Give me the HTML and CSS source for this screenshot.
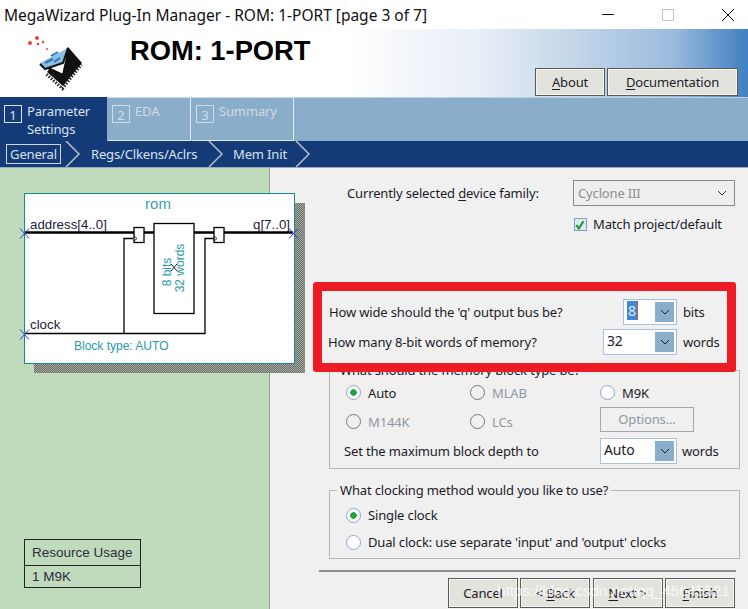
FILE: index.html
```html
<!DOCTYPE html>
<html>
<head>
    <title>MegaWizard Plug-In Manager</title>
    <link rel="stylesheet" href="styles.css">
</head>
<body>
    <div class="wizard">
        <div class="titlebar">
            <span class="titlebar__text">MegaWizard Plug-In Manager - ROM: 1-PORT [page 3 of 7]</span>
            <div class="titlebar__controls">
                <svg class="titlebar__icon" width="14" height="14" viewBox="0 0 14 14"><path d="M1 6.5h12" stroke="#111" fill="none"/></svg>
                <svg class="titlebar__icon" width="14" height="14" viewBox="0 0 14 14"><rect x="1.5" y="1.5" width="11" height="11" stroke="#c4c4c4" fill="none"/></svg>
                <svg class="titlebar__icon" width="14" height="14" viewBox="0 0 14 14"><path d="M1 1l12 12M13 1L1 13" stroke="#111" fill="none"/></svg>
            </div>
        </div>

        <header class="banner">
            <svg class="banner__logo" width="60" height="60" viewBox="0 0 60 60">
                <g fill="#e0483a">
                    <circle cx="4" cy="11" r="2"/><circle cx="11" cy="6" r="2"/><circle cx="12" cy="12" r="1.3"/>
                    <circle cx="17" cy="10" r="1.2"/><circle cx="21" cy="17" r="1"/>
                </g>
                <path d="M21 40l16 14 19-23-14-16z" fill="#111"/>
                <path d="M21 41l16 14 19-24" stroke="#222" stroke-width="3" stroke-dasharray="1.500 1.500" fill="none" transform="translate(-.5 1.500)"/>
                <path d="M22 36l15 7 4-18z" fill="#fff"/>
                <path d="M22 36l15 7 4-18" fill="none" stroke="#111" stroke-width="2"/>
                <path d="M14 31l28-15-5 15-18 5z" fill="#8dbfe0"/>
                <path d="M19 31l8-4M28 30l6-4M25 24l7-4" stroke="#2b75b5" stroke-width="2" fill="none"/>
                <path d="M14 32l5 5 18-6 5-15" stroke="#111" stroke-width="2" fill="none"/>
            </svg>
            <h1 class="banner__title">ROM: 1-PORT</h1>
            <div class="banner__buttons">
                <button class="btn btn--about"><u>A</u>bout</button>
                <button class="btn btn--docs"><u>D</u>ocumentation</button>
            </div>
        </header>

        <nav class="tabs">
            <div class="tab tab--active"><span class="tab__num">1</span><span class="tab__label">Parameter<br>Settings</span></div>
            <div class="tab tab--eda"><span class="tab__num">2</span><span class="tab__label">EDA</span></div>
            <div class="tab tab--summary"><span class="tab__num">3</span><span class="tab__label">Summary</span></div>
        </nav>

        <nav class="subnav">
            <span class="subnav__item subnav__item--active">General</span>
            <svg class="subnav__arrow" width="16" height="26" viewBox="0 0 16 26"><path d="M1 0l13 13L1 26" stroke="#b5bdc8" stroke-width="1.5" fill="none"/></svg>
            <span class="subnav__item subnav__item--regs">Regs/Clkens/Aclrs</span>
            <svg class="subnav__arrow" width="16" height="26" viewBox="0 0 16 26"><path d="M1 0l13 13L1 26" stroke="#b5bdc8" stroke-width="1.5" fill="none"/></svg>
            <span class="subnav__item subnav__item--mem">Mem Init</span>
            <svg class="subnav__arrow" width="16" height="26" viewBox="0 0 16 26"><path d="M1 0l13 13L1 26" stroke="#b5bdc8" stroke-width="1.5" fill="none"/></svg>
        </nav>

        <main class="content">
            <aside class="symbol-pane">
                <svg class="symbol" width="282" height="184" viewBox="0 0 282 184">
                    <defs>
                        <pattern id="dots" width="2" height="2" patternUnits="userSpaceOnUse">
                            <rect width="2" height="2" fill="#a4a89f"/><rect width="1" height="1" fill="#6c706a"/><rect x="1" y="1" width="1" height="1" fill="#6c706a"/>
                        </pattern>
                    </defs>
                    <rect x="10" y="10" width="271" height="170" fill="url(#dots)"/>
                    <rect x="0.5" y="0.5" width="270" height="170" fill="#fff" stroke="#138c92"/>
                    <text x="134" y="16" class="symbol__name" text-anchor="middle">rom</text>
                    <path d="M1 39.500h129M170 39.500h99" stroke="#000" stroke-width="2.500" fill="none"/>
                    <path d="M1 140.500h180V45.500h9M100 140.500V45.500h9" stroke="#000" fill="none" stroke-width="1.300"/>
                    <rect x="110" y="34.500" width="10" height="15" fill="#fff" stroke="#000" stroke-width="1.300"/>
                    <rect x="190" y="34.500" width="10" height="15" fill="#fff" stroke="#000" stroke-width="1.300"/>
                    <path d="M110 43l3 2.500-3 2.500M190 43l3 2.500-3 2.500" fill="none" stroke="#000" stroke-width=".8"/>
                    <rect x="130" y="30.500" width="40" height="90" fill="#fff" stroke="#000" stroke-width="1.300"/>
                    <text class="symbol__rotated" transform="translate(147 79) rotate(-90)" text-anchor="middle">8 bits</text>
                    <text class="symbol__rotated" transform="translate(160 75) rotate(-90)" text-anchor="middle">32 words</text>
                    <path d="M147 71l6 7M153 71l-6 7" stroke="#222" fill="none"/>
                    <text x="6" y="36" class="symbol__pin">address[4..0]</text>
                    <text x="266" y="36" class="symbol__pin" text-anchor="end">q[7..0]</text>
                    <text x="6" y="136" class="symbol__pin">clock</text>
                    <text x="50" y="157" class="symbol__block">Block type: AUTO</text>
                    <path d="M-4 34.500l9 10M5 34.500l-9 10M-4 135.500l9 10M5 135.500l-9 10M265 34.500l9 10M274 34.500l-9 10" stroke="#2b3fd0" fill="none" transform="translate(0 1)"/>
                </svg>
                <table class="usage">
                    <tr><th>Resource Usage</th></tr>
                    <tr><td>1 M9K</td></tr>
                </table>
            </aside>

            <section class="form-pane">
                <div class="device-row">
                    <label class="device-row__label">Currently selected <u>d</u>evice family:</label>
                    <div class="device-select">
                        <span class="device-select__value">Cyclone III</span>
                        <svg width="10" height="6" viewBox="0 0 10 6"><path d="M1 1l4 4 4-4" stroke="#333" fill="none"/></svg>
                    </div>
                </div>
                <label class="match">
                    <span class="check"><svg width="13" height="13" viewBox="0 0 13 13"><path d="M1.500 6l3 4L10 1.500" stroke="#1c9b2c" stroke-width="2.500" fill="none"/></svg></span>
                    Match project/default
                </label>

                <div class="sizes">
                    <div class="sizes__row">
                        <span class="sizes__label">How wide should the 'q' output bus be?</span>
                        <div class="combo combo--bits">
                            <span class="combo__value"><span class="combo__selected">8</span></span>
                            <span class="combo__arrow"><svg width="10" height="6" viewBox="0 0 10 6"><path d="M1 1l4 4 4-4" stroke="#222" fill="none"/></svg></span>
                        </div>
                        <span class="sizes__unit">bits</span>
                    </div>
                    <div class="sizes__row sizes__row--second">
                        <span class="sizes__label">How many 8-bit words of memory?</span>
                        <div class="combo combo--words">
                            <span class="combo__value">32</span>
                            <span class="combo__arrow"><svg width="10" height="6" viewBox="0 0 10 6"><path d="M1 1l4 4 4-4" stroke="#222" fill="none"/></svg></span>
                        </div>
                        <span class="sizes__unit">words</span>
                    </div>
                </div>

                <fieldset class="group group--block">
                    <legend class="group__legend">What should the memory block type be?</legend>
                    <div class="block-grid">
                        <span class="radio radio--on">Auto</span>
                        <span class="radio radio--off">MLAB</span>
                        <span class="radio radio--plain">M9K</span>
                        <span class="radio radio--off">M144K</span>
                        <span class="radio radio--off">LCs</span>
                        <button class="btn btn--options">Options...</button>
                    </div>
                    <div class="depth-row">
                        <span class="depth-row__label">Set the maximum block depth to</span>
                        <div class="combo combo--depth">
                            <span class="combo__value">Auto</span>
                            <span class="combo__arrow"><svg width="10" height="6" viewBox="0 0 10 6"><path d="M1 1l4 4 4-4" stroke="#222" fill="none"/></svg></span>
                        </div>
                        <span class="sizes__unit">words</span>
                    </div>
                </fieldset>

                <fieldset class="group group--clock">
                    <legend class="group__legend">What clocking method would you like to use?</legend>
                    <span class="radio radio--on">Single clock</span>
                    <span class="radio radio--plain">Dual clock: use separate 'input' and 'output' clocks</span>
                </fieldset>

                <div class="footer">
                    <button class="btn btn--footer">Cancel</button>
                    <button class="btn btn--footer">&lt; <u>B</u>ack</button>
                    <button class="btn btn--footer"><u>N</u>ext &gt;</button>
                    <button class="btn btn--footer"><u>F</u>inish</button>
                </div>
            </section>
        </main>
        <span class="watermark">https://blog.csdn.net/qq_45645521</span>
    </div>
</body>
</html>
```
FILE: styles.css
```css
* {
    margin: 0;
    padding: 0;
    box-sizing: border-box;
}

body {
    font-family: "Noto Sans", "Open Sans", sans-serif;
    font-size: 13px;
    letter-spacing: -0.15px;
    color: #1c1c28;
    background: #f0f0f0;
    overflow: hidden;
}

u {
    text-underline-offset: 2px;
}

.wizard {
    position: relative;
    width: 748px;
    height: 609px;
    display: flex;
    flex-direction: column;
    overflow: hidden;
}

.titlebar {
    height: 29px;
    flex: none;
    background: #fff;
    display: flex;
    align-items: center;
    padding-left: 4px;
}

.titlebar__text {
    font-size: 15.500px;
    letter-spacing: 0;
    color: #111;
}

.titlebar__controls {
    margin-left: auto;
    display: flex;
    gap: 46px;
    padding-right: 13px;
}

.banner {
    height: 68px;
    flex: none;
    display: flex;
    background: linear-gradient(to right, #fff 0%, #fff 46%, #e6edf6 65%, #b9cfe6 80%, #9bbbdd 90%, #3f7fc1 100%);
    padding-top: 3px;
    padding-left: 26px;
}

.banner__logo {
    flex: none;
}

.banner__title {
    font-family: "Liberation Sans", sans-serif;
    font-size: 27.300px;
    font-weight: 700;
    letter-spacing: 0;
    color: #000;
    margin-left: 44px;
    line-height: 36px;
    margin-top: 1px;
}

.banner__buttons {
    margin-left: auto;
    margin-top: 36px;
    padding-right: 10px;
    display: flex;
    gap: 2px;
    align-items: flex-start;
}

.btn {
    font-family: inherit;
    font-size: 13px;
    letter-spacing: -0.15px;
    background: #e3e3dd;
    border: 1px solid #5a5a5a;
    color: #1c1c28;
    box-shadow: inset 0 0 0 1px #f5f5f2;
}

.btn--about {
    width: 70px;
    height: 28px;
}

.btn--docs {
    width: 131px;
    height: 28px;
}

.tabs {
    height: 44px;
    flex: none;
    background: #8aadca;
    border-top: 1px solid #bcd0e4;
    display: flex;
    gap: 1px;
}

.tab {
    display: flex;
    gap: 5px;
    padding: 7px 0 0 4px;
    color: #cfdbe8;
    border-right: 1px solid #e4ebf2;
    border-bottom: 1px solid #e4ebf2;
    border-top: 1px solid #cfdde9;
    margin-top: -1px;
    line-height: 18px;
}

.tab--active {
    width: 107px;
    background: #143b77;
    color: #d8e2ee;
    border: none;
    padding-top: 8px;
}

.tab--eda {
    width: 83px;
}

.tab--summary {
    width: 102px;
}

.tab__num {
    width: 18px;
    height: 18px;
    flex: none;
    border: 1px solid currentColor;
    text-align: center;
    font-size: 13px;
    line-height: 18px;
}

.tab__label {
    margin-top: -3px;
}

.subnav {
    height: 27px;
    flex: none;
    background: #143b77;
    border-bottom: 1px solid #9aa8bd;
    display: flex;
    align-items: center;
    color: #d8e2ee;
    padding-left: 6px;
}

.subnav__item--active {
    width: 55px;
    height: 20px;
    border: 1px solid #cfd6e0;
    text-align: center;
    line-height: 18px;
}

.subnav__arrow {
    margin-left: 4px;
    flex: none;
}

.subnav__item--regs {
    margin-left: 10px;
    width: 113px;
}

.subnav__item--mem {
    margin-left: 9px;
    width: 58px;
}

.content {
    flex: 1;
    display: flex;
    min-height: 0;
}

.symbol-pane {
    width: 270px;
    flex: none;
    background: #c0dabc;
    border-right: 1px solid #9a9a9a;
    padding: 25px 0 0 24px;
    display: flex;
    flex-direction: column;
}

.symbol {
    display: block;
    overflow: visible;
    flex: none;
}

.symbol text {
    font-family: "Liberation Sans", sans-serif;
    letter-spacing: 0;
}

.symbol__name {
    font-size: 15px;
    fill: #3aa0ab;
}

.symbol__pin {
    font-size: 13.300px;
    fill: #1c1c38;
}

.symbol__block {
    font-size: 12px;
    fill: #2a9aa8;
}

.symbol__rotated {
    font-size: 12px;
    fill: #2a9aa8;
}

.usage {
    width: 117px;
    margin-top: 162px;
    border-collapse: collapse;
    font-family: "Liberation Sans", sans-serif;
    font-size: 13.500px;
    letter-spacing: 0;
    color: #2c2c3c;
}

.usage th,
.usage td {
    border: 1px solid #222;
    font-weight: 400;
    text-align: left;
    padding-left: 7px;
}

.usage th {
    height: 26px;
}

.usage td {
    height: 22px;
}

.form-pane {
    flex: 1;
    position: relative;
    padding: 12px 0 0 0;
}

.device-row {
    display: flex;
    align-items: center;
    padding-left: 77px;
    height: 26px;
}

.device-row__label {
    width: 226px;
}

.device-select {
    width: 162px;
    height: 26px;
    border: 1px solid #8a8a8a;
    background: #eeeeee;
    display: flex;
    align-items: center;
    justify-content: space-between;
    padding: 0 7px 0 4px;
    color: #8f8f8f;
}

.match {
    display: flex;
    align-items: center;
    gap: 6px;
    height: 20px;
    margin: 8px 0 0 304px;
}

.check {
    width: 13px;
    height: 13px;
    background: #dde8f3;
    border: 1px solid #8aa0b8;
    display: flex;
    overflow: hidden;
}

.sizes {
    width: 423px;
    height: 90px;
    margin: 48px 0 0 43px;
    border: 9px solid #ed1c24;
    border-radius: 3px;
    padding-top: 8px;
    position: relative;
    background: #f0f0f0;
    z-index: 1;
}

.sizes__row {
    display: flex;
    align-items: center;
    height: 26px;
    padding-left: 7px;
}

.sizes__row--second {
    margin-top: 4px;
    padding-left: 6px;
}

.sizes__label {
    flex: 1;
}

.sizes__unit {
    margin-left: 6px;
    width: 44px;
}

.combo {
    height: 26px;
    background: #fff;
    border: 1px solid #a9c2da;
    display: flex;
    align-items: stretch;
}

.combo--bits {
    width: 54px;
}

.combo--words {
    width: 74px;
}

.combo--depth {
    width: 77px;
}

.combo__value {
    flex: 1;
    padding-left: 3px;
    font-size: 14px;
    line-height: 22px;
}

.combo__selected {
    background: #3f8ad6;
    color: #dce9f6;
    padding: 0 1px;
    border-right: 1px solid #d8590c;
}

.combo__arrow {
    width: 19px;
    margin: 2px;
    background: #8aadca;
    display: flex;
    align-items: center;
    justify-content: center;
}

.group {
    border: 1px solid #b5b5b5;
    margin-left: 59px;
    width: 411px;
}

.group__legend {
    margin-left: 7px;
    padding: 0 3px;
    line-height: 16px;
}

.group--block {
    height: 107px;
    margin-top: -10px;
    position: relative;
}

.block-grid {
    display: grid;
    grid-template-columns: 124px 130px 95px;
    grid-auto-rows: 29px;
    align-items: center;
    margin: 0 0 0 16px;
}

.radio {
    display: flex;
    align-items: center;
    gap: 7px;
    height: 26px;
}

.radio::before {
    content: "";
    width: 13px;
    height: 13px;
    flex: none;
    border-radius: 50%;
    border: 1px solid #7d8a98;
    background: #fff;
}

.radio--off {
    color: #8f98a3;
}

.radio--off::before {
    border-color: #777;
    background: #f0f0f0;
}

.radio--on::before {
    background: radial-gradient(circle, #22a33a 0 3px, #fff 3.500px);
    border-color: #8aa8c4;
}

.radio--plain::before {
    border-color: #8aa8c4;
}

.btn--options {
    width: 94px;
    height: 25px;
    margin-top: -5px;
    color: #8f98a3;
    background: #f0f0f0;
    border: 1px solid #a8a8a8;
    box-shadow: none;
}

.depth-row {
    display: flex;
    align-items: center;
    height: 26px;
    margin: 2px 0 0 14px;
}

.depth-row__label {
    width: 256px;
}

.depth-row .sizes__unit {
    margin-left: 5px;
}

.group--clock {
    height: 77px;
    margin-top: 13px;
    padding: 4px 0 0 16px;
}

.group--clock .group__legend {
    margin-left: -9px;
}

.group--clock .radio + .radio {
    margin-top: 1px;
}

.footer {
    position: relative;
    border-top: 2px solid #8c8c8c;
    margin: 11px 0 0 49px;
    width: 417px;
    padding: 6px 0 0 129px;
    display: flex;
    gap: 2.300px;
}

.btn--footer {
    width: 70px;
    height: 30px;
    flex: none;
}

.watermark {
    position: absolute;
    left: 497px;
    top: 582px;
    font-size: 15.500px;
    color: rgba(255, 255, 255, 0.75);
    font-family: "Liberation Sans", sans-serif;
}
```
